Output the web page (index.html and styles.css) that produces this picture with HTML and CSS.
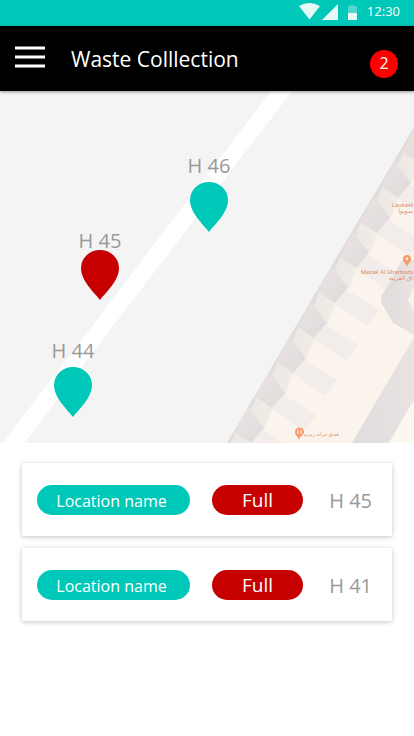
FILE: index.html
```html
<!DOCTYPE html>
<html lang="en">
<head>
  <meta charset="utf-8">
  <meta name="viewport" content="width=device-width, initial-scale=1">
  <title>Waste Colllection</title>
  <link rel="stylesheet" href="styles.css">
</head>
<body>
  <div class="status-bar">
    <svg class="status-icons" width="60" height="18" viewBox="0 0 60 18">
      <path d="M0 4 Q10 -2 21 4 L10.500 17.500 Z" fill="#e6f9f7"/>
      <path d="M39 2 V18 H23 Z" fill="#e6f9f7"/>
      <path d="M49 4 H51 V3 H55 V4 H58 V11 H49 Z" fill="#4dd8cd"/>
      <path d="M49 11 H58 V18 H49 Z" fill="#e6f9f7"/>
    </svg>
    <span class="clock">12:30</span>
  </div>

  <header class="toolbar">
    <button class="menu-button" type="button" aria-label="Menu">
      <svg width="30" height="22" viewBox="0 0 30 22">
        <path d="M0 2 H30 M0 11 H30 M0 20 H30" stroke="#fff" stroke-width="3"/>
      </svg>
    </button>
    <h1>Waste Colllection</h1>
    <span class="badge">2</span>
  </header>

  <main>
    <section class="map">
      <svg class="map-drawing" viewBox="0 0 414 352" preserveAspectRatio="xMinYMin slice">
        <defs>
          <linearGradient id="wall" x1="0" y1="0" x2="1" y2="0">
            <stop offset="0" stop-color="#e0dcdc"/>
            <stop offset="1" stop-color="#e9e4e3"/>
          </linearGradient>
          <linearGradient id="bayLight" x1="0" y1="0" x2="1" y2="0">
            <stop offset="0" stop-color="#ebe7e3"/>
            <stop offset="1" stop-color="#f1ece6"/>
          </linearGradient>
          <linearGradient id="bayDark" x1="0" y1="0" x2="1" y2="1">
            <stop offset="0" stop-color="#e9e4e2"/>
            <stop offset="1" stop-color="#e0dbdb"/>
          </linearGradient>
          <clipPath id="buildingEdge">
            <path d="M414 36 L332 174 L227 352 H414 Z"/>
          </clipPath>
          <!-- one bay of the stepped facade with the shadow on its roof -->
          <g id="bay">
            <path d="M334 212 L347 199 L379 219 L367 235 Z" fill="#f2edea"/>
            <path d="M319 199 L335 212 L327 233 L312 222 L298 236 L285 254 L310 205 Z" fill="#e2dddd"/>
            <path d="M319 201 L335 212 L327 233 L311 222 Z" fill="url(#bayLight)"/>
            <path d="M319 201 L332 176 L348 197 L335 212 Z" fill="url(#bayDark)"/>
          </g>
        </defs>

        <rect width="414" height="352" fill="#f4f4f4"/>
        <path d="M271 0 H292 L24 352 H3 Z" fill="#fff"/>

        <g clip-path="url(#buildingEdge)">
          <rect x="220" width="194" height="352" fill="#fbf4ed"/>
          <use href="#bay" x="105" y="-175"/>
          <use href="#bay" x="84" y="-140"/>
          <use href="#bay" x="63" y="-105"/>
          <use href="#bay" x="42" y="-70"/>
          <use href="#bay" x="21" y="-35"/>
          <use href="#bay"/>
          <use href="#bay" x="-21" y="35"/>
          <use href="#bay" x="-42" y="70"/>
          <use href="#bay" x="-63" y="105"/>
          <use href="#bay" x="-84" y="140"/>
          <path d="M402 169 H414 V244 L393 232 L382 213 L381 206 L393 186 Z" fill="url(#wall)"/>
          <path d="M414 196 L408 209 L414 219 Z" fill="#fbf4ed"/>
          <path d="M414 246 L352 352 H389 L414 309 Z" fill="url(#wall)"/>
          <path d="M414 309 L389 352 H414 Z" fill="#fcf7f0"/>
        </g>

        <g class="place-names">
          <text x="413" y="116">Laokast</text>
          <text x="413" y="122">سوبوا</text>
          <text x="413" y="183">Mezak Al Gharbiata</text>
          <text x="413" y="189">اق الغربية</text>
          <text class="small-name" x="339" y="345">فندق جراند زمزم</text>
        </g>
        <g fill="#fa9a68">
          <path d="M407 176 C406 172 403 171 403 168 A4 4 0 0 1 411 168 C411 171 408 172 407 176 Z"/>
          <path d="M299 349 C298 345 295 344 295 341 A4 4 0 0 1 304 341 C304 344 300 345 299 349 Z"/>
        </g>
        <path d="M406 167 H408 L407 169 Z M298 339 V343 M301 339 V343" fill="#fff" stroke="#fff"/>
      </svg>

      <button class="marker marker-46" type="button">
        <span>H 46</span>
        <svg width="38" height="50" viewBox="0 0 38 50"><path d="M19 50 C13 42 0 31 0 18 A19 18 0 0 1 38 18 C38 31 25 42 19 50 Z"/></svg>
      </button>
      <button class="marker marker-45 full" type="button">
        <span>H 45</span>
        <svg width="38" height="50" viewBox="0 0 38 50"><path d="M19 50 C13 42 0 31 0 18 A19 18 0 0 1 38 18 C38 31 25 42 19 50 Z"/></svg>
      </button>
      <button class="marker marker-44" type="button">
        <span>H 44</span>
        <svg width="38" height="50" viewBox="0 0 38 50"><path d="M19 50 C13 42 0 31 0 18 A19 18 0 0 1 38 18 C38 31 25 42 19 50 Z"/></svg>
      </button>
    </section>

    <ul class="bin-list">
      <li class="bin-card">
        <button class="pill location" type="button">Location name</button>
        <span class="pill state">Full</span>
        <span class="bin-number">H 45</span>
      </li>
      <li class="bin-card">
        <button class="pill location" type="button">Location name</button>
        <span class="pill state">Full</span>
        <span class="bin-number">H 41</span>
      </li>
    </ul>
  </main>
</body>
</html>
```

FILE: styles.css
```css
* {
  box-sizing: border-box;
}

body {
  margin: 0;
  background-color: #fff;
  font-family: "Open Sans", "Noto Sans", sans-serif;
}

button {
  border: none;
  padding: 0;
  background: none;
  font-family: inherit;
  cursor: pointer;
}

svg {
  display: block;
}

/* Top bars */
.status-bar {
  display: flex;
  justify-content: flex-end;
  align-items: center;
  gap: 8px;
  height: 26px;
  padding: 0 14px 4px 0;
  background-color: #00c8b8;
  color: #fff;
}

.clock {
  font-size: 13px;
  line-height: 20px;
}

.toolbar {
  position: relative;
  z-index: 1;
  display: flex;
  align-items: center;
  height: 65px;
  padding: 0 16px 0 15px;
  background-color: #000;
  box-shadow: 0 1px 3px rgba(0, 0, 0, 0.4);
  color: #fff;
}

.menu-button {
  padding-bottom: 4px;
}

.toolbar h1 {
  flex: 1;
  margin: 0 0 0 26px;
  font-size: 21px;
  font-weight: 400;
  line-height: 28px;
}

.badge {
  width: 28px;
  height: 28px;
  margin-top: 10px;
  border-radius: 50%;
  background-color: #f00;
  font-size: 16px;
  line-height: 27px;
  text-align: center;
}

/* Map */
.map {
  position: relative;
  height: 352px;
  overflow: hidden;
}

.map-drawing {
  width: 100%;
  height: 100%;
}

.place-names {
  fill: #dd8f6c;
  font-family: Roboto, "DejaVu Sans", sans-serif;
  font-size: 6px;
  text-anchor: end;
}

.small-name {
  font-size: 5px;
}

.marker {
  position: absolute;
  display: flex;
  flex-direction: column;
  align-items: center;
  width: 42px;
  color: #999;
  font-size: 20px;
  line-height: 32px;
  white-space: nowrap;
}

.marker svg {
  fill: #00c8b8;
}

.marker.full {
  line-height: 18px;
}

.marker.full svg {
  fill: #c60000;
}

.marker-46 {
  left: 188px;
  top: 59px;
}

.marker-45 {
  left: 79px;
  top: 141px;
}

.marker-44 {
  left: 52px;
  top: 244px;
}

/* Bin list */
.bin-list {
  display: flex;
  flex-direction: column;
  gap: 12px;
  margin: 0;
  padding: 20px 22px;
  list-style: none;
}

.bin-card {
  display: flex;
  align-items: center;
  height: 73px;
  padding: 0 20px 0 15px;
  border-radius: 2px;
  box-shadow: 0 1px 5px rgba(0, 0, 0, 0.24);
}

.pill {
  height: 30px;
  border-radius: 15px;
  color: #fff;
  line-height: 30px;
  text-align: center;
}

.location {
  width: 153px;
  margin-right: 22px;
  padding: 1px 4px 0 0;
  background-color: #00c8b8;
  font-size: 16px;
}

.state {
  width: 91px;
  background-color: #c60000;
  font-size: 19px;
}

.bin-number {
  margin-left: auto;
  padding-top: 2px;
  color: #999;
  font-size: 20px;
  line-height: 30px;
}
```
